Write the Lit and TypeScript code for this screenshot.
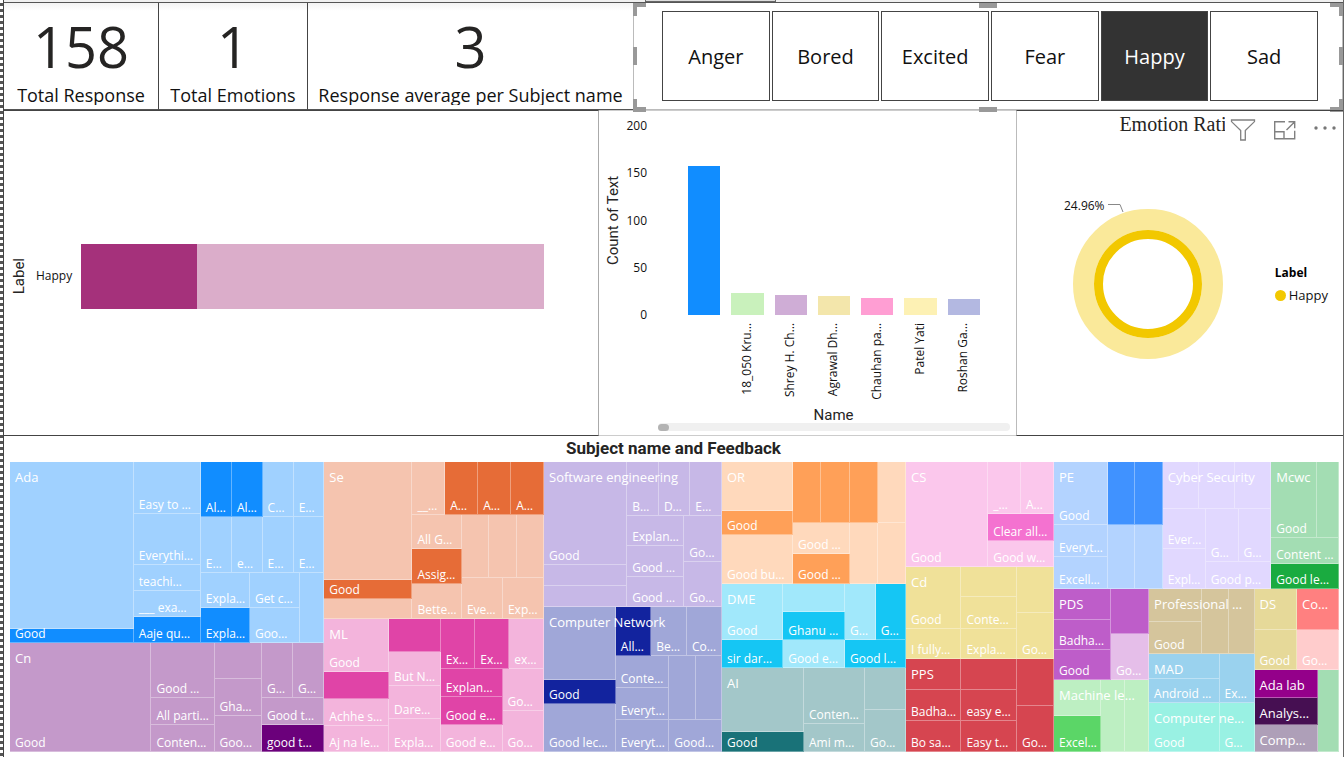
import { LitElement, html, css, svg, TemplateResult } from "lit";
import { customElement, property, state } from "lit/decorators.js";
import { classMap } from "lit/directives/class-map.js";
import { styleMap } from "lit/directives/style-map.js";

interface Node {
  kind: "row" | "col" | "cell" | "group";
  weight: number;
  label?: string;
  lit?: boolean;
  color?: string;
  children?: Node[];
}

const row = (weight: number, ...children: Node[]): Node => ({ kind: "row", weight, children });
const col = (weight: number, ...children: Node[]): Node => ({ kind: "col", weight, children });
const cell = (weight: number, label = ""): Node => ({ kind: "cell", weight, label });
const hit = (weight: number, label = ""): Node => ({ kind: "cell", weight, label, lit: true });
const group = (weight: number, label: string, color: string, ...children: Node[]): Node => ({
  kind: "group", weight, label, color, children,
});

const TREE: Node = row(1,
  col(943,
    group(540, "Ada", "#118dff",
      col(371, cell(499), hit(40, "Good")),
      col(201, cell(154, "Easy to …"), cell(154, "Everythi…"), cell(77, "teachi…"), cell(77, "___ exa…"), hit(77, "Aaje qu…")),
      col(370,
        row(165, hit(93, "Al…"), hit(92, "Al…"), cell(93, "C…"), cell(92, "E…")),
        row(167, cell(93, "E…"), cell(92, "e…"), cell(93, "E…"), cell(92, "E…")),
        row(207, col(147, cell(104, "Expla…"), hit(103, "Expla…")), col(149, cell(104, "Get c…"), cell(103, "Goo…")), cell(74)))),
    group(327, "Cn", "#6b007b",
      cell(424, "Good"),
      col(189, cell(164, "Good …"), cell(81, "All parti…"), cell(81, "Conten…")),
      col(142, cell(109), cell(110, "Gha…"), cell(107, "Goo…")),
      col(187, row(164, cell(93, "G…"), cell(94, "G…")), cell(81, "Good t…"), hit(81, "good t…")))),
  col(659,
    group(468, "Se", "#e66c37",
      col(264, cell(351), hit(59, "Good"), cell(57)),
      col(394,
        row(157, cell(98, "__…"), hit(99, "A…"), hit(99, "A…"), hit(98, "A…")),
        row(310,
          col(148, cell(103, "All G…"), hit(104, "Assig…"), cell(103, "Bette…")),
          col(246, row(188, cell(82), cell(82), cell(82)), row(122, cell(123, "Eve…"), cell(123, "Exp…")))))),
    group(399, "ML", "#e044a7",
      col(194, cell(160, "Good"), hit(81), cell(80, "Achhe s…"), cell(77, "Aj na le…")),
      col(155, hit(101), cell(100, "But N…"), cell(99, "Dare…"), cell(98, "Expla…")),
      col(309,
        row(150, hit(103, "Ex…"), hit(102, "Ex…"), cell(104, "ex…")),
        row(248,
          col(185, hit(85, "Explan…"), hit(82, "Good e…"), cell(81, "Good e…")),
          col(124, cell(126, "Go…"), cell(122, "Go…")))))),
  col(534,
    group(434, "Software engineering", "#744ec2",
      col(249, cell(308, "Good"), cell(63), cell(62)),
      col(284,
        row(161, cell(95, "B…"), cell(94, "D…"), cell(95, "E…")),
        row(272,
          col(171, cell(91, "Explan…"), cell(91, "Good …"), cell(90, "Good …")),
          col(113, cell(136, "Go…"), cell(136, "Go…"))))),
    group(433, "Computer Network", "#12239e",
      col(215, cell(217), hit(72, "Good"), cell(143, "Good lec…")),
      col(318,
        row(145, hit(106, "All…"), cell(107, "Be…"), cell(105, "Co…")),
        row(287,
          col(160, cell(96, "Conte…"), cell(96, "Everyt…"), cell(95, "Everyt…")),
          col(158, row(192, cell(80), cell(78)), cell(95, "Good…")))))),
  col(552,
    group(364, "OR", "#ffa058",
      col(213, cell(145), hit(72, "Good"), cell(146, "Good bu…")),
      col(339,
        row(182, hit(85), hit(85), hit(84), cell(85)),
        row(181, col(170, cell(91, "Good …"), hit(90, "Good …")), cell(85), cell(84)))),
    group(253, "DME", "#15c6f4",
      col(184, cell(168, "Good"), hit(85, "sir dar…")),
      col(185, cell(84), hit(84, "Ghanu …"), cell(85, "Good e…")),
      col(183, row(168, cell(92, "G…"), hit(91, "G…")), hit(85, "Good l…"))),
    group(250, "AI", "#197278",
      col(246, cell(188), hit(61, "Good")),
      col(183, cell(166, "Conten…"), cell(83, "Ami m…")),
      col(123, cell(124), cell(125, "Go…")))),
  col(444,
    group(313, "CS", "#f472d0",
      cell(246, "Good"),
      col(197, row(156, cell(98, "_…"), cell(99, "A…")), hit(79, "Clear all…"), cell(77, "Good w…"))),
    group(276, "Cd", "#d9b300",
      col(166, cell(185, "Good"), cell(91, "I fully…")),
      col(166, cell(92), cell(93, "Conte…"), cell(91, "Expla…")),
      col(111, cell(137), cell(139, "Go…"))),
    group(278, "PPS", "#d64550",
      col(166, hit(94), hit(92, "Badha…"), hit(92, "Bo sa…")),
      col(166, hit(94), hit(92, "easy e…"), hit(92, "Easy t…")),
      col(111, hit(140), hit(138, "Go…")))),
  col(855,
    row(380,
      group(326, "PE", "#4092ff",
        col(163, cell(189, "Good"), cell(95, "Everyt…"), cell(95, "Excell…")),
        col(163, row(189, hit(81), hit(82)), row(190, cell(81), cell(82)))),
      group(325, "Cyber Security", "#b49eff",
        col(325,
          row(141, cell(108), cell(108), cell(109)),
          row(238,
            col(129, cell(119, "Ever…"), cell(119, "Expl…")),
            col(196, row(158, cell(98, "G…"), cell(98, "G…")), cell(80, "Good p…"))))),
      group(203, "Mcwc", "#1aab40",
        col(203, row(227, cell(136, "Good"), cell(67)), cell(76, "Content …"), hit(76, "Good le…")))),
    row(487,
      col(285,
        group(271, "PDS", "#be5dc9",
          col(171, hit(91), hit(90, "Badha…"), hit(90, "Good")),
          col(114, hit(135), cell(136, "Go…"))),
        group(216, "Machine le…", "#5bd667",
          col(142, cell(108), hit(108, "Excel…")), cell(72), cell(71))),
      col(316,
        group(195, "Professional …", "#966e08",
          col(158, cell(97), cell(98, "Good")), cell(80), cell(78)),
        group(146, "MAD", "#028ed4",
          col(211, cell(73), cell(73, "Android …")), cell(105, "Ex…")),
        group(146, "Computer ne…", "#00dcb9", cell(211, "Good"), cell(105, "G…"))),
      col(253,
        row(243,
          group(127, "DS", "#c0a000", col(127, cell(121), cell(122, "Good"))),
          group(126, "Co…", "#ff8080", col(126, hit(121), cell(122, "Go…")))),
        row(244,
          col(190,
            group(82, "Ada lab", "#94008a", hit(1)),
            group(82, "Analys…", "#460f52", hit(1)),
            group(80, "Comp…", "#350f4d", cell(1))),
          group(63, "", "#1aab40", cell(1)))))),
);

@customElement("feedback-treemap")
class FeedbackTreemap extends LitElement {
  static styles = css`
    :host { display: flex; min-height: 0; }
    .row, .col, .group { display: flex; flex-basis: 0; min-width: 0; min-height: 0; }
    .col { flex-direction: column; }
    .group { position: relative; }
    .cell {
      display: flex; align-items: flex-end; flex-basis: 0; min-width: 0; min-height: 0;
      background: color-mix(in srgb, var(--tone) 40%, white);
      box-shadow: inset -1px -1px 0 rgba(255, 255, 255, 0.35);
    }
    .lit { background: var(--tone); }
    .label, .title { color: #fff; white-space: nowrap; }
    .label { padding: 0 0 1px 5px; font-size: 12px; line-height: 16px; }
    .title { position: absolute; top: 5px; left: 5px; font-size: 13px; line-height: 20px; }
  `;

  private draw(n: Node): TemplateResult {
    if (n.kind === "cell") {
      return html`<div class=${classMap({ cell: true, lit: !!n.lit })} style=${styleMap({ flexGrow: String(n.weight) })}
        >${n.label ? html`<span class="label">${n.label}</span>` : ""}</div>`;
    }
    const style: Record<string, string> = { flexGrow: String(n.weight) };
    if (n.color) style["--tone"] = n.color;
    return html`<div class=${n.kind} style=${styleMap(style)}>
      ${n.children!.map((c) => this.draw(c))}
      ${n.kind === "group" && n.label ? html`<span class="title">${n.label}</span>` : ""}
    </div>`;
  }

  render() {
    return this.draw(TREE);
  }
}

@customElement("kpi-card")
class KpiCard extends LitElement {
  @property() value = "";
  @property() label = "";
  static styles = css`
    :host {
      display: flex; flex-direction: column; align-items: center; box-sizing: border-box;
      border-right: 1px solid #444; padding-top: 9px; min-width: 0;
    }
    .value { font-size: 56px; line-height: 68px; color: #252423; }
    .label { margin-top: 2px; font-size: 18px; line-height: 26px; height: 23px; overflow: hidden; white-space: nowrap; color: #111; }
  `;
  render() {
    return html`<div class="value">${this.value}</div><div class="label">${this.label}</div>`;
  }
}

@customElement("emotion-slicer")
class EmotionSlicer extends LitElement {
  @state() private selected = "Happy";
  private names = ["Anger", "Bored", "Excited", "Fear", "Happy", "Sad"];
  static styles = css`
    :host { display: block; position: relative; box-sizing: border-box; padding: 8px 24px 8px 28px; border: 1px solid #bbb; border-top: 0; }
    .tiles { display: flex; gap: 2px; height: 100%; }
    button {
      flex: 1 1 0; min-width: 0; border: 1px solid #444; background: #fff; color: #111; padding: 0;
      font-family: inherit; font-size: 20px;
    }
    button[aria-pressed="true"] { background: #333; color: #fff; }
    .handle { position: absolute; box-sizing: border-box; border: 0 solid #999; width: 13px; height: 13px; }
    .tl { top: 0; left: -1px; border-width: 4px 0 0 4px; }
    .tr { top: 0; right: -1px; border-width: 4px 4px 0 0; }
    .bl { bottom: -3px; left: -1px; border-width: 0 0 5px 4px; }
    .br { bottom: -3px; right: -1px; border-width: 0 4px 5px 0; }
    .tc, .bc { left: calc(50% - 9px); width: 18px; height: 5px; background: #999; }
    .tc { top: 0; }
    .bc { bottom: -3px; }
    .ml, .mr { top: calc(50% - 9px); width: 4px; height: 18px; background: #999; }
    .ml { left: -1px; }
    .mr { right: -1px; }
  `;
  render() {
    return html`
      <div class="tiles">
        ${this.names.map((n) => html`<button aria-pressed=${n === this.selected ? "true" : "false"} @click=${() => (this.selected = n)}>${n}</button>`)}
      </div>
      ${["tl", "tc", "tr", "ml", "mr", "bl", "bc", "br"].map((p) => html`<span class="handle ${p}"></span>`)}
    `;
  }
}

const BARS = [
  { name: "", value: 158, color: "#118dff" },
  { name: "18_050 Kru…", value: 23, color: "#c9f1bc" },
  { name: "Shrey H. Ch…", value: 21, color: "#cfadd6" },
  { name: "Agrawal Dh…", value: 20, color: "#f3e6ab" },
  { name: "Chauhan pa…", value: 18, color: "#ff9ed3" },
  { name: "Patel Yati", value: 18, color: "#fdf1b4" },
  { name: "Roshan Ga…", value: 17, color: "#b3b8e1" },
];

@customElement("app-root")
class AppRoot extends LitElement {
  static styles = css`
    :host {
      display: flex; box-sizing: border-box; min-height: 100vh; background: #fff; color: #111;
      font-family: "Open Sans", "Noto Sans", sans-serif; font-size: 12px; line-height: 16px;
    }
    .edge { flex: none; width: 3px; background: repeating-linear-gradient(#fff 0 3px, #555 3px 6px); }
    .page { flex: 1; min-width: 0; display: flex; flex-direction: column; border-left: 1px solid #444; border-right: 1px solid #666; }
    .strip { height: 2px; background: #f0f0f0; border-bottom: 1px solid #555; padding-left: 641px; }
    .tab { width: 131px; height: 2px; box-sizing: border-box; background: #ddd; border: 1px solid #666; border-top: 0; }
    .top { display: grid; grid-template-columns: 155fr 149fr 325fr 710fr; height: 107px; }
    .top kpi-card { border-bottom: 1px solid #555; background: linear-gradient(#f3f3f3, #fff 8px); }
    .top kpi-card + kpi-card + kpi-card { border-right: 0; }
    .middle { display: grid; grid-template-columns: 595fr 417fr 327fr; height: 326px; }
    .panel { box-sizing: border-box; min-width: 0; border-top: 1px solid #444; border-bottom: 1px solid #444; }
    .axis { writing-mode: vertical-rl; transform: rotate(180deg); font: 15px/20px Roboto, sans-serif; color: #252423; text-align: center; }

    .split { display: flex; align-items: center; padding: 6px 54px 0 5px; border-right: 1px solid #aaa; }
    .split .cat { padding: 0 9px 0 7px; }
    .hbar { flex: 1; display: flex; height: 65px; background: #dbadca; }
    .hbar .part { background: #a5317b; }

    .columns { display: grid; grid-template-columns: 48px 1fr; grid-template-rows: 205px 84px 16px 8px; padding-top: 7px; border-color: #ccc; }
    .yaxis { display: flex; justify-content: space-between; padding-left: 4px; }
    .ticks { display: flex; flex-direction: column; justify-content: space-between; text-align: right; }
    .bars, .names { display: grid; grid-template-columns: repeat(7, 1fr); margin: 0 31px 0 35px; }
    .bars { padding: 8px 0; align-items: end; }
    .bar { margin: 0 5px 0 6px; }
    .names { grid-column: 2; justify-items: center; align-items: start; }
    .names span { writing-mode: vertical-rl; transform: rotate(180deg); white-space: nowrap; }
    .xaxis { grid-column: 2; text-align: center; font: 15px/16px Roboto, sans-serif; color: #252423; margin: 0 31px 0 35px; }
    .scroll { grid-column: 2; display: flex; align-items: center; margin: 0 6px 0 11px; border-radius: 4px; background: #f0f0f0; }
    .thumb { width: 11px; height: 7px; border-radius: 4px; background: #b3b3b3; }

    .donut { position: relative; border-left: 1px solid #bbb; display: flex; flex-direction: column; }
    h2 { margin: 0; padding-right: 4px; font: 20px/26px "Liberation Serif", serif; color: #252423; text-align: center; }
    .tools { position: absolute; top: 2px; right: 0; width: 118px; height: 34px; display: flex; align-items: center; justify-content: space-between; box-sizing: border-box; padding: 0 6px 0 5px; background: #fff; }
    .tools button { border: 0; background: none; padding: 0; display: flex; }
    .ring { flex: 1; display: flex; align-items: center; justify-content: space-between; padding: 0 15px 0 41px; }
    .ring > svg { display: block; margin-bottom: 16px; }
    .ring text { font-size: 12px; fill: #111; }
    .legend { line-height: 22px; padding-bottom: 4px; }
    .legend b { display: block; color: #000; }
    .key { display: flex; align-items: center; gap: 3px; font-size: 13px; }
    .dot { width: 11px; height: 11px; border-radius: 50%; background: #f2c800; }

    h1 { margin: 0; padding-top: 1px; font: bold 17px/22px Roboto, sans-serif; color: #252423; text-align: center; height: 26px; box-sizing: border-box; }
    .tree { flex: 1; min-height: 290px; display: flex; flex-direction: column; padding: 0 4px 5px 6px; }
    feedback-treemap { flex: 1; }
  `;

  private tools() {
    return html`<div class="tools">
      <button aria-label="Filters">${svg`<svg width="26" height="24" viewBox="0 0 26 24" fill="none" stroke="#808080" stroke-width="1.3"><path d="M1.500 2h23v1.600l-9.200 9V22h-4.600v-9.400L1.500 3.600z"/></svg>`}</button>
      <button aria-label="Focus mode">${svg`<svg width="24" height="22" viewBox="0 0 24 22" fill="none" stroke="#808080" stroke-width="1.400"><path d="M12 2.700H1.700v17h20v-8M1.700 12.700h9.300v7M13.500 11L21.500 3M15.500 2.700h6.200v6.500"/></svg>`}</button>
      <button aria-label="More options">${svg`<svg width="24" height="22" viewBox="0 0 24 22" fill="#777"><circle cx="3" cy="9" r="1.700"/><circle cx="12" cy="9" r="1.700"/><circle cx="21" cy="9" r="1.700"/></svg>`}</button>
    </div>`;
  }

  render() {
    return html`
      <div class="edge"></div>
      <main class="page">
        <div class="strip"><div class="tab"></div></div>
        <section class="top">
          <kpi-card value="158" label="Total Response"></kpi-card>
          <kpi-card value="1" label="Total Emotions"></kpi-card>
          <kpi-card value="3" label="Response average per Subject name"></kpi-card>
          <emotion-slicer></emotion-slicer>
        </section>
        <section class="middle">
          <div class="panel split">
            <span class="axis">Label</span>
            <span class="cat">Happy</span>
            <div class="hbar"><div class="part" style=${styleMap({ width: "25%" })}></div></div>
          </div>
          <div class="panel columns">
            <div class="yaxis">
              <span class="axis">Count of Text</span>
              <div class="ticks">${[200, 150, 100, 50, 0].map((t) => html`<span>${t}</span>`)}</div>
            </div>
            <div class="bars">
              ${BARS.map((b) => html`<div class="bar" style=${styleMap({ height: `${b.value / 2}%`, background: b.color })}></div>`)}
            </div>
            <div class="names">${BARS.map((b) => html`<span>${b.name}</span>`)}</div>
            <div class="xaxis">Name</div>
            <div class="scroll"><div class="thumb"></div></div>
          </div>
          <div class="panel donut">
            <h2>Emotion Ratio</h2>
            ${this.tools()}
            <div class="ring">
              <svg width="168" height="164" viewBox="-4 -4 168 164">
                <circle cx="86" cy="84" r="64.500" fill="none" stroke="#fae99a" stroke-width="21"/>
                <circle cx="86" cy="84" r="49.500" fill="none" stroke="#f2c800" stroke-width="9"/>
                <path d="M46 4.500H58L61 12" fill="none" stroke="#888"/>
                <text x="2" y="10">24.96%</text>
              </svg>
              <div class="legend">
                <b>Label</b>
                <span class="key"><span class="dot"></span>Happy</span>
              </div>
            </div>
          </div>
        </section>
        <h1>Subject name and Feedback</h1>
        <div class="tree"><feedback-treemap></feedback-treemap></div>
      </main>
    `;
  }
}
